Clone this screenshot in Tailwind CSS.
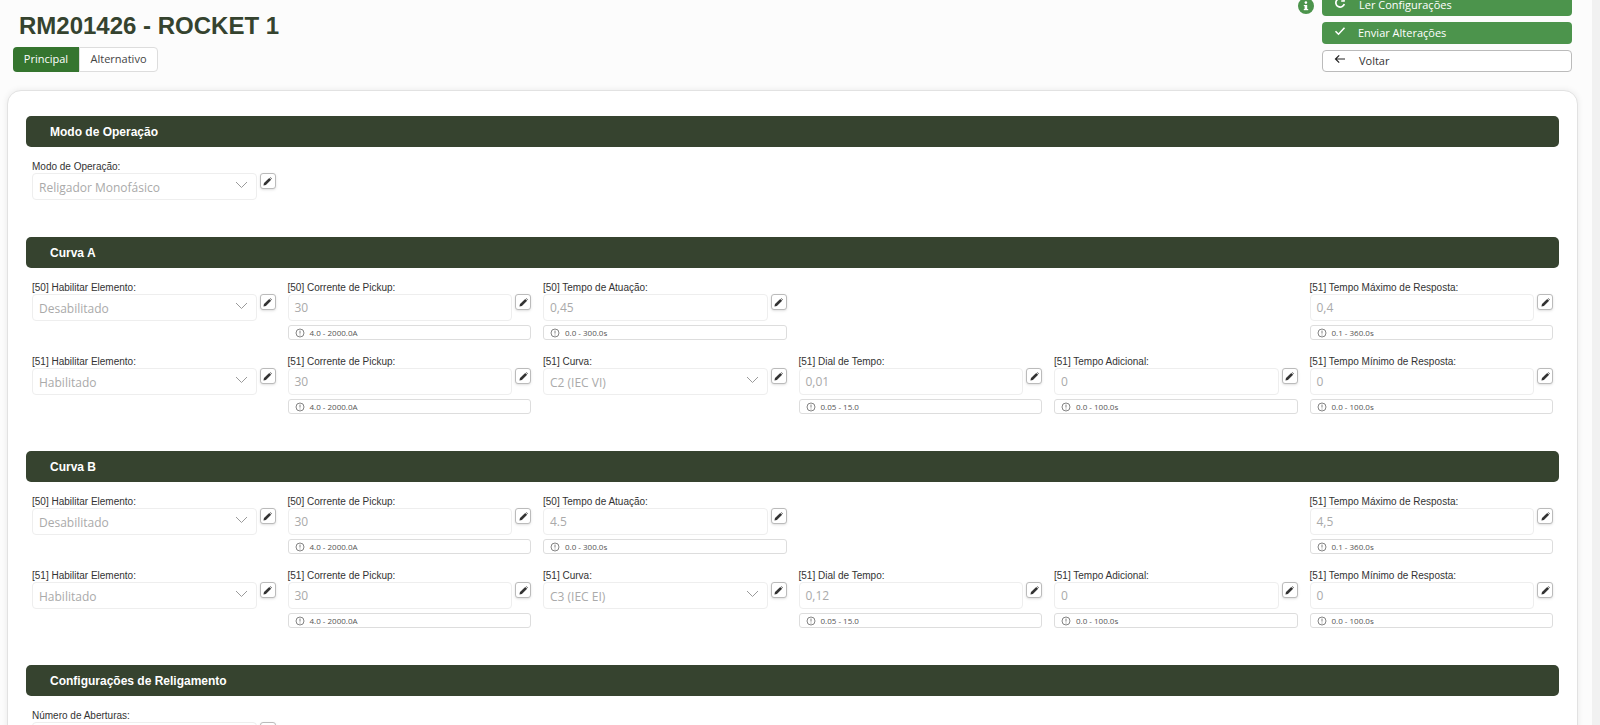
<!DOCTYPE html>
<html lang="en">
<head>
    <meta charset="UTF-8">
    <title>RM201426 - ROCKET 1</title>
    <script src="https://cdn.jsdelivr.net/npm/@tailwindcss/browser@4"></script>
</head>
<body class="bg-[#fcfcfc] h-[725px] overflow-hidden font-['Open_Sans',sans-serif]">
    <div class="flex h-[725px] overflow-hidden">
        <main class="w-[1592px] shrink-0 pl-[7px] pr-[14px]">
            <header class="flex justify-between h-[96px] -mt-[6px]">
                <div class="pl-[6px]">
                    <h1 class="pl-[6px] pt-[18px] text-[24px] leading-[28px] font-bold text-[#35432f] font-['Liberation_Sans',sans-serif]">RM201426 - ROCKET 1</h1>
                    <div class="flex mt-[7px] h-[25px] text-[11px]">
                        <div class="w-[66px] flex items-center justify-center rounded-l bg-[#35752f] text-white">Principal</div>
                        <div class="w-[79px] flex items-center justify-center rounded-r border border-[#dddddd] bg-white text-[#444444]">Alternativo</div>
                    </div>
                </div>
                <div class="flex gap-[8px] pr-[6px]">
                    <svg class="w-4 h-4 mt-[4px]" viewBox="0 0 16 16"><circle cx="8" cy="8" r="8" fill="#4c944c"/><rect x="6.6" y="7" width="2.6" height="5" fill="#fff"/><rect x="5.8" y="11" width="4.4" height="1.2" fill="#fff"/><rect x="5.8" y="7" width="3" height="1.1" fill="#fff"/><circle cx="7.9" cy="4.6" r="1.3" fill="#fff"/></svg>
                    <div class="w-[250px] flex flex-col gap-[6px] text-[11px]">
                        <div class="h-[22px] rounded bg-[#4c944c] text-white flex items-center pl-[12px]">
                            <svg class="w-[12px] h-[12px] mr-[13px] -mt-[4px]" viewBox="0 0 12 12" fill="none" stroke="#fff" stroke-width="1.7"><path d="M9.6 3.2A4.3 4.3 0 1 0 10.3 7"/><path d="M10.2 1v3H7.2" stroke-width="1.3"/></svg>
                            <span>Ler Configurações</span>
                        </div>
                        <div class="h-[22px] rounded bg-[#4c944c] text-white flex items-center pl-[12px]">
                            <svg class="w-[12px] h-[12px] mr-[12px] -mt-[4px]" viewBox="0 0 12 12" fill="none" stroke="#fff" stroke-width="1.6"><path d="M1.5 6.2l3 3 6-6.4"/></svg>
                            <span>Enviar Alterações</span>
                        </div>
                        <div class="h-[22px] rounded border border-[#bbbbbb] bg-white text-[#333333] flex items-center pl-[11px]">
                            <svg class="w-[12px] h-[12px] mr-[13px] -mt-[4px]" viewBox="0 0 12 12" fill="none" stroke="#222" stroke-width="1.2"><path d="M11 6H1.5M5.2 2.4L1.5 6l3.7 3.6"/></svg>
                            <span>Voltar</span>
                        </div>
                    </div>
                </div>
            </header>
            <div id="card" class="h-[700px] rounded-[14px] border border-[#e2e2e2] bg-white pt-[25px] pl-[18px] pr-[18px] shadow-[0_0_6px_rgba(0,0,0,0.08)]"></div>
        </main>
        <div class="flex-1 bg-[#f1f1f1]"></div>
    </div>

    <script>
        const pencil = `<button class="w-[16px] h-[16px] mt-0 ml-[3px] shrink-0 rounded-[3px] border border-[#bbbbbb] bg-white shadow-sm flex items-center justify-center"><svg class="w-[9px] h-[9px]" viewBox="0 0 10 10"><path d="M0.5 9.5L1.1 6.8 6.9 1 9 3.1 3.2 8.9Z" fill="#333"/><path d="M7.5 0.4L8.2 0.2 9.8 1.8 9.6 2.5Z" fill="#333"/></svg></button>`;
        const chevron = `<svg class="w-[13px] h-[8px]" viewBox="0 0 13 8" fill="none" stroke="#9a9a9a" stroke-width="1"><path d="M1 1l5.5 5.5L12 1"/></svg>`;
        const clock = `<svg class="w-[10px] h-[10px] mr-[5px] shrink-0" viewBox="0 0 10 10" fill="none" stroke="#666" stroke-width="0.8"><circle cx="5" cy="5" r="4"/><path d="M5 2.6v3"/><path d="M5 6.6v0.9"/></svg>`;

        function field(f) {
            if (!f) return `<div></div>`;
            const box = f.select
                ? `<div class="flex-1 min-w-0 h-[27px] rounded-[4px] border border-[#eeeeee] bg-white pl-[6px] pr-[8px] flex items-center justify-between text-[12px] pt-[2px] text-[#aaaaaa]"><span>${f.v}</span><span class="-mt-[6px]">${chevron}</span></div>`
                : `<div class="flex-1 min-w-0 h-[27px] rounded-[4px] border border-[#eeeeee] bg-white pl-[6px] flex items-center text-[12px] text-[#aaaaaa]">${f.v}</div>`;
            const hint = f.hint
                ? `<div class="h-[15px] mt-[4px] rounded-[3px] border border-[#dddddd] bg-white pl-[6px] flex items-center text-[8px] text-[#555555]">${clock}${f.hint}</div>`
                : ``;
            return `<div>
                <div class="h-[13px] leading-[13px] text-[10px] text-[#333333] font-['Liberation_Sans',sans-serif]">${f.l}</div>
                <div class="flex items-start">${box}${pencil}</div>
                ${hint}
            </div>`;
        }

        function curve(tAtu, tMax, curva, dial, tMin) {
            return [
                { l: "[50] Habilitar Elemento:", v: "Desabilitado", select: true },
                { l: "[50] Corrente de Pickup:", v: "30", hint: "4.0 - 2000.0A" },
                { l: "[50] Tempo de Atuação:", v: tAtu, hint: "0.0 - 300.0s" },
                null,
                null,
                { l: "[51] Tempo Máximo de Resposta:", v: tMax, hint: "0.1 - 360.0s" },
                { l: "[51] Habilitar Elemento:", v: "Habilitado", select: true },
                { l: "[51] Corrente de Pickup:", v: "30", hint: "4.0 - 2000.0A" },
                { l: "[51] Curva:", v: curva, select: true },
                { l: "[51] Dial de Tempo:", v: dial, hint: "0.05 - 15.0" },
                { l: "[51] Tempo Adicional:", v: "0", hint: "0.0 - 100.0s" },
                { l: "[51] Tempo Mínimo de Resposta:", v: tMin, hint: "0.0 - 100.0s" },
            ];
        }

        const sections = [
            { title: "Modo de Operação", fields: [{ l: "Modo de Operação:", v: "Religador Monofásico", select: true }] },
            { title: "Curva A", fields: curve("0,45", "0,4", "C2 (IEC VI)", "0,01", "0") },
            { title: "Curva B", fields: curve("4.5", "4,5", "C3 (IEC EI)", "0,12", "0") },
            { title: "Configurações de Religamento", fields: [{ l: "Número de Aberturas:", v: "", select: true }] },
        ];

        document.getElementById("card").innerHTML = sections.map(s => `
            <section class="mb-[37px]">
                <div class="h-[31px] rounded-[5px] bg-[#36432f] pl-[24px] flex items-center text-[12px] font-bold text-white font-['Liberation_Sans',sans-serif]">${s.title}</div>
                <div class="grid grid-cols-6 gap-x-[12px] gap-y-[15px] px-[6px] pt-[13px]">${s.fields.map(field).join("")}</div>
            </section>`).join("");
    </script>
</body>
</html>
